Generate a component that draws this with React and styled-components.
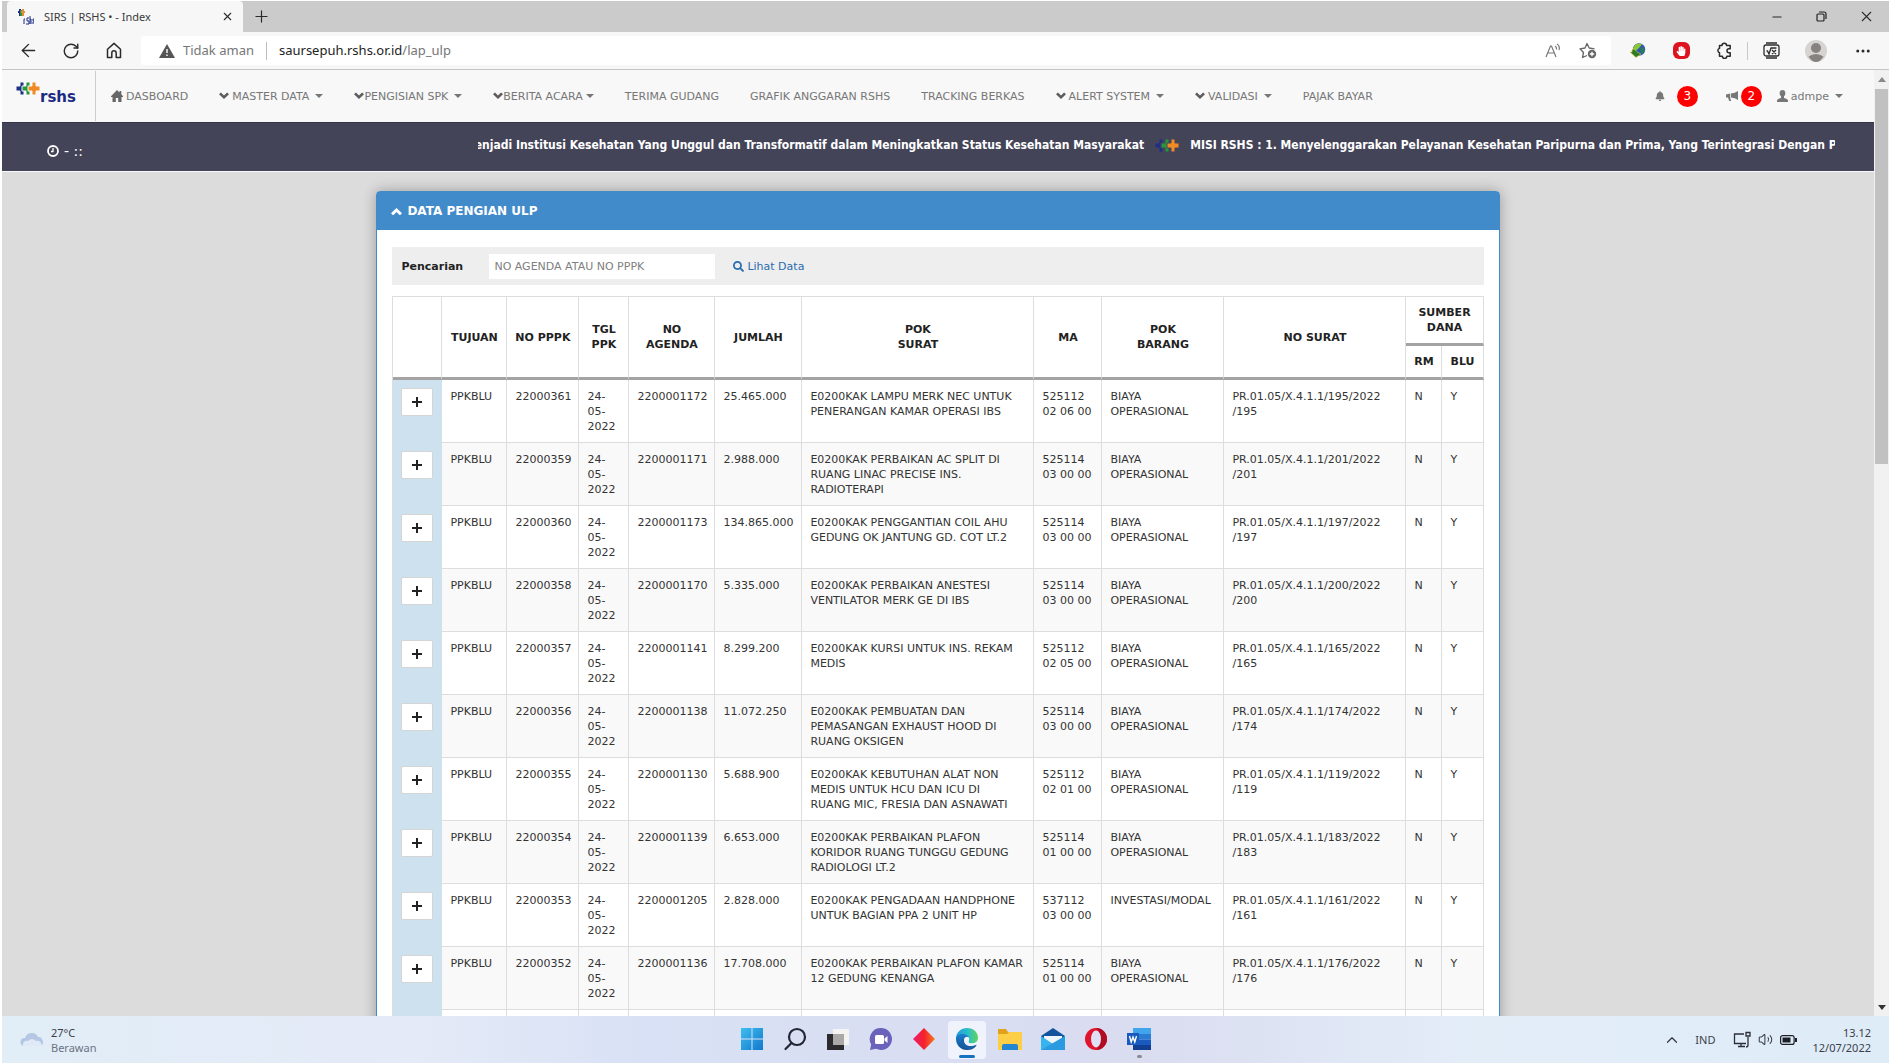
import React from "react";
import styled, { createGlobalStyle } from "styled-components";
import { ArrowLeft, RotateCw, X, Minus, Plus, ChevronUp, Volume2, Ellipsis } from "lucide-react";
import { FaBell, FaHandPaper, FaSearch } from "react-icons/fa";

const GlobalStyle = createGlobalStyle`
  * {
    box-sizing: border-box;
  }
  body {
    margin: 0;
    background: #ffffff;
    font-family: "DejaVu Sans", Verdana, sans-serif;
    font-size: 11px;
    line-height: 15px;
    color: #333333;
  }
  button, input {
    font-family: inherit;
    font-size: inherit;
    color: inherit;
  }
  svg {
    display: block;
    flex-shrink: 0;
  }
`;

const Screen = styled.div`
  height: 100vh;
  display: flex;
  flex-direction: column;
  overflow: hidden;
  padding: 1px 3px 1px 2px;
`;

/* ---------- browser ---------- */

const TabBar = styled.div`
  height: 31px;
  flex-shrink: 0;
  display: flex;
  background: #cbcbcb;
  font-family: "Noto Sans", sans-serif;
`;

const Tab = styled.div`
  width: 236px;
  margin-left: 5px;
  padding: 0 10px;
  display: flex;
  align-items: center;
  gap: 10px;
  background: #f7f7f7;
  border-radius: 4px 4px 0 0;
  color: #3b3b3b;
`;

const TabTitle = styled.span`
  flex: 1;
  white-space: nowrap;
`;

const IconButton = styled.button`
  width: ${(p) => p.$w || 24}px;
  height: ${(p) => p.$h || 24}px;
  padding: 0;
  border: 0;
  background: none;
  display: flex;
  align-items: center;
  justify-content: center;
  color: #2b2b2b;
  cursor: pointer;
`;

const WindowControls = styled.div`
  margin-left: auto;
  display: flex;
`;

const Toolbar = styled.div`
  height: 38px;
  flex-shrink: 0;
  display: flex;
  align-items: center;
  background: #f7f7f7;
  border-bottom: 1px solid #c4c4c4;
  font-family: "Noto Sans", sans-serif;
`;

const NavButtons = styled.div`
  display: flex;
  gap: 19px;
  padding: 0 15px 0 14px;
`;

const AddressBar = styled.div`
  flex: 1;
  height: 29px;
  padding: 0 14px 0 18px;
  display: flex;
  align-items: center;
  gap: 8px;
  background: #ffffff;
  border-radius: 3px;
  font-size: 13px;
  color: #767676;
`;

const Separator = styled.span`
  width: 1px;
  height: 18px;
  margin: 0 4px;
  background: #bdbdbd;
`;

const Url = styled.span`
  flex: 1;
  b {
    font-weight: 400;
    color: #222222;
  }
`;

const Extensions = styled.div`
  display: flex;
  align-items: center;
  gap: 19px;
  padding: 0 12px 0 15px;
`;

const ExtSeparator = styled.span`
  width: 1px;
  height: 18px;
  margin: 0 -8px;
  background: #c8c8c8;
`;

const StopSign = styled.span`
  width: 17px;
  height: 17px;
  border-radius: 6px;
  background: #dd1420;
  color: #ffffff;
  display: flex;
  align-items: center;
  justify-content: center;
`;

const Viewport = styled.div`
  flex: 1;
  min-height: 0;
  display: flex;
`;

const Page = styled.div`
  flex: 1;
  min-width: 0;
  overflow: hidden;
  background: #dcdcdc;
`;

const Scrollbar = styled.div`
  width: 15px;
  padding: 4px 0;
  display: flex;
  flex-direction: column;
  align-items: center;
  background: #f1f1f1;
`;

const Thumb = styled.div`
  width: 13px;
  height: 40%;
  margin: 5px 0 auto;
  background: #c1c1c1;
`;

const ScrollArrow = styled.span`
  height: 10px;
  display: flex;
  align-items: center;
`;

/* ---------- site header ---------- */

const Navbar = styled.nav`
  height: 52px;
  display: flex;
  align-items: center;
  background: #f8f8f8;
`;

const Brand = styled.a`
  width: 94px;
  height: 50px;
  padding: 11px 0 0 14px;
  display: flex;
  border-right: 1px solid #cccccc;
  text-decoration: none;
`;

const BrandName = styled.span`
  margin-top: 8px;
  font-size: 15px;
  font-weight: 700;
  color: #1c2a80;
`;

const Menu = styled.ul`
  flex: 1;
  margin: 0;
  padding: 0;
  display: flex;
  list-style: none;
`;

const MenuLink = styled.a`
  padding: 0 16px 0 15px;
  display: flex;
  align-items: center;
  gap: ${(p) => (p.$tight ? 0 : 3)}px;
  color: #777777;
  text-decoration: none;
  white-space: nowrap;
`;

const Caret = styled.span`
  margin-left: ${(p) => p.$space || 3}px;
  border-top: 4px solid;
  border-left: 4px solid transparent;
  border-right: 4px solid transparent;
`;

const UserMenu = styled.div`
  display: flex;
  align-items: center;
  padding-right: 15px;
  color: #777777;
`;

const Notice = styled.a`
  display: flex;
  align-items: center;
  gap: ${(p) => p.$gap}px;
  margin-right: ${(p) => p.$after}px;
  color: #777777;
  text-decoration: none;
`;

const Badge = styled.span`
  width: 21px;
  height: 21px;
  border-radius: 50%;
  display: flex;
  align-items: center;
  justify-content: center;
  background: #ff0000;
  color: #ffffff;
  font-size: 12px;
`;

const InfoBar = styled.div`
  height: 50px;
  padding: 0 39px 0 45px;
  display: flex;
  align-items: center;
  background: #444459;
  border-top: 1px solid #343446;
  border-bottom: 1px solid #fafafa;
  color: #ffffff;
`;

const Clock = styled.div`
  width: 431px;
  padding-top: 8px;
  display: flex;
  align-items: center;
  gap: 5px;
  font-size: 14px;
`;

const Marquee = styled.div`
  flex: 1;
  min-width: 0;
  padding-bottom: 3px;
  overflow: hidden;
  display: flex;
  align-items: center;
  gap: 11px;
  font-family: "DejaVu Sans Condensed", Tahoma, "Noto Sans", sans-serif;
  font-size: 12px;
  font-weight: 700;
  white-space: nowrap;
`;

const Vision = styled.span`
  margin-left: -14px;
`;

/* ---------- panel ---------- */

const Panel = styled.section`
  width: 60%;
  margin: 19px auto 0;
  background: #ffffff;
  border: 1px solid #428bca;
  border-radius: 4px;
  box-shadow: 0 0 14px rgba(0, 0, 0, 0.3);
`;

const PanelHeading = styled.h1`
  height: 38px;
  margin: 0;
  padding: 0 14px;
  display: flex;
  align-items: center;
  gap: 5px;
  background: #428bca;
  color: #ffffff;
  font-size: 12px;
`;

const PanelBody = styled.div`
  padding: 17px 15px;
`;

const SearchForm = styled.form`
  height: 38px;
  margin-bottom: 11px;
  padding: 0 9px;
  display: flex;
  align-items: center;
  background: #eeeeee;
`;

const SearchLabel = styled.label`
  width: 88px;
  font-weight: 700;
  color: #222222;
`;

const SearchInput = styled.input`
  width: 226px;
  height: 25px;
  padding: 0 5px;
  border: 0;
  background: #ffffff;
  &::placeholder {
    color: #808080;
    opacity: 1;
  }
`;

const SearchLink = styled.a`
  margin-left: 18px;
  display: flex;
  align-items: center;
  gap: 3px;
  color: #2a6cae;
  text-decoration: none;
`;

const Table = styled.table`
  width: 100%;
  table-layout: fixed;
  border-collapse: separate;
  border-spacing: 0;
  border-top: 1px solid #dddddd;
  border-left: 1px solid #dddddd;
`;

const Th = styled.th`
  padding: 8px 0;
  border-right: 1px solid #dddddd;
  border-bottom: 3px solid #a3a3a3;
  color: #222222;
`;

const Row = styled.tr`
  background: ${(p) => (p.$striped ? "#f9f9f9" : "#ffffff")};
`;

const Td = styled.td`
  padding: 9px 8px 8px;
  border-right: 1px solid #dddddd;
  border-bottom: 1px solid #dddddd;
  vertical-align: top;
  white-space: pre-line;
`;

const ExpandCell = styled.td`
  padding: 8px 8px 0;
  background: #cee1ee;
  vertical-align: top;
`;

const ExpandButton = styled.button`
  width: 32px;
  height: 28px;
  padding: 0;
  border: 1px solid #d5d5d5;
  border-radius: 2px;
  background: #ffffff;
  color: #222222;
  cursor: pointer;
  svg {
    margin: 0 auto;
  }
`;

/* ---------- taskbar ---------- */

const Taskbar = styled.footer`
  height: 47px;
  flex-shrink: 0;
  display: grid;
  grid-template-columns: 1fr auto 1fr;
  align-items: center;
  background: linear-gradient(90deg, #e1edf7, #e4eaf7 22%, #d8e1f5 34%, #dadcf0 60%, #e3edf8 78%, #deecf8);
  font-family: "Noto Sans", sans-serif;
  color: #3c3f4a;
`;

const Weather = styled.div`
  padding-left: 18px;
  display: flex;
  align-items: center;
  gap: 6px;
`;

const Muted = styled.div`
  color: #6c7384;
`;

const Apps = styled.div`
  display: flex;
  gap: 5px;
`;

const AppButton = styled.button`
  width: 38px;
  height: 38px;
  padding: 6px 0 0;
  border: 0;
  border-radius: 4px;
  background: ${(p) => (p.$active ? "#f0f3fc" : "none")};
  display: flex;
  flex-direction: column;
  align-items: center;
  gap: 4px;
`;

const Running = styled.span`
  width: ${(p) => (p.$active ? 16 : 5)}px;
  height: 3px;
  border-radius: 2px;
  background: ${(p) => (p.$active ? "#1672c0" : "#8a8d96")};
`;

const Tray = styled.div`
  padding-right: 18px;
  display: flex;
  align-items: center;
  justify-content: flex-end;
`;

const TrayIcons = styled.div`
  margin: 0 15px 0 7px;
  display: flex;
  align-items: center;
  gap: 7px;
`;

const Language = styled.span`
  margin: 0 11px 0 7px;
`;

const DateTime = styled.div`
  text-align: right;
`;

function Cross({ x, fill, edge }) {
  return (
    <path
      d={`M${x + 4} 0h4v4h4v5h-4v4h-4v-4h-4v-5h4z`}
      fill={fill}
      stroke={edge}
      strokeWidth="1"
      strokeLinejoin="round"
    />
  );
}

function LogoMark({ edge = "#f8f8f8" }) {
  return (
    <svg width="24" height="13" viewBox="0 0 24 13" aria-hidden="true">
      <Cross x={0} fill="#1d2f86" edge={edge} />
      <Cross x={6} fill="#27963c" edge={edge} />
      <Cross x={12} fill="#f08a24" edge={edge} />
    </svg>
  );
}

function Favicon() {
  return (
    <svg width="17" height="17" viewBox="0 0 17 17" aria-hidden="true">
      <path d="M3 1v7M1 4h4" stroke="#1d2f86" strokeWidth="2" />
      <path d="M4 2v6" stroke="#27963c" strokeWidth="2" />
      <path d="M6 1v7M4 4h4" stroke="#e88a3a" strokeWidth="2" />
      <path d="M7 16v-5h1M12 10h-2v3h2v3h-3M13 8v8M13 11h1v5M17 11h-1v2h1v2h-2" stroke="#1d2f86" fill="none" />
    </svg>
  );
}

function HomeOutline() {
  return (
    <svg width="16" height="17" viewBox="0 0 16 17" fill="none" stroke="#2b2b2b" strokeWidth="1.5">
      <path d="M1.5 7.2 8 1.4l6.500 5.800V15.500H10.200V11a2.200 2.200 0 0 0-4.400 0v4.500H1.500z" strokeLinejoin="round" />
    </svg>
  );
}

function HomeSolid() {
  return (
    <svg width="12" height="12" viewBox="0 0 12 12" fill="#666666">
      <path d="M6 0 8.500 2.500V1h1.800v3.300L12 6.200V7h-1.500v5H7.200V8H4.800v4H1.500V7H0v-.8z" />
    </svg>
  );
}

function Chevron({ up, size = 10, color = "#5c5c5c" }) {
  return (
    <svg width={size} height={size * 0.8} viewBox="0 0 10 8" fill={color}>
      <path d={up ? "M5 1 10 5.700 8.100 7.600 5 4.600 1.900 7.600 0 5.700z" : "M5 7 0 2.300 1.900.4 5 3.400 8.100.4 10 2.300z"} />
    </svg>
  );
}

function Bullhorn() {
  return (
    <svg width="12" height="11" viewBox="0 0 12 11" fill="#777777">
      <path d="M12 0v9Q9 6.800 5 6.600V2.500Q9 2.200 12 0zM0 3.500 4.200 2.600v4L5 10H3.200L2 6.500H0z" />
    </svg>
  );
}

function Warning() {
  return (
    <svg width="16" height="14" viewBox="0 0 16 14">
      <path d="M8 0 16 14H0z" fill="#555555" />
      <path d="M8 5v4M8 10.500v1.500" stroke="#ffffff" strokeWidth="1.400" />
    </svg>
  );
}

function ReadAloud() {
  return (
    <svg width="17" height="16" viewBox="0 0 17 16" fill="none" stroke="#777777" strokeWidth="1.200">
      <path d="M1 14 5.500 3h1L11 14M2.800 10h6.500" />
      <path d="M10 3q2 1.200 1.500 3.500M12 1q3.300 2.300 2 6" />
    </svg>
  );
}

function StarAdd() {
  return (
    <svg width="18" height="17" viewBox="0 0 18 17" fill="none" stroke="#666666" strokeWidth="1.300">
      <path d="M8 13.500 3.500 15.500 4.500 10.500 1 6.800 6 6 8 1.500 10.200 6 15.500 6.800" strokeLinejoin="round" />
      <circle cx="13" cy="12" r="4.200" fill="#666666" stroke="none" />
      <path d="M13 9.800v4.400M10.800 12h4.400" stroke="#ffffff" />
    </svg>
  );
}

function IdmIcon() {
  return (
    <svg width="16" height="15" viewBox="0 0 16 15">
      <circle cx="9" cy="6.500" r="6.200" fill="#2c55b4" />
      <path d="M4 3Q8-1 12 1.500L9 5 5 8.500 2.500 7z" fill="#8cc63a" />
      <path d="M11 4q3 0 4 3-1 3-3 4l-2-3z" fill="#2a7b60" />
      <path d="M2 7v2H0l6 5.500L11 11 8 9.500 4 6z" fill="#2b7d26" stroke="#e5c84a" strokeWidth=".6" />
    </svg>
  );
}

function PuzzleIcon() {
  return (
    <svg width="16" height="17" viewBox="0 0 16 17" fill="none" stroke="#2b2b2b" strokeWidth="1.500" strokeLinejoin="round">
      <path d="M3.500 3.500H6a2.300 2.300 0 0 1 4.600 0h3.600v3.200h-1.200a2 2 0 0 0 0 4h1.200v3.600h-3.400a2.200 2.200 0 0 1-4.400 0H3.500v-3.500a2.300 2.300 0 0 1 0-4.400z" />
    </svg>
  );
}

function MathSolver() {
  return (
    <svg width="17" height="17" viewBox="0 0 17 17" fill="none" stroke="#2b2b2b" strokeWidth="1.300">
      <rect x="1" y="3" width="15" height="11" rx="2" />
      <path d="M3 1h11M3 16h11M3.500 9l1 0 1.500 3 2-6h5.500M9 8l4 4M13 8l-4 4" />
    </svg>
  );
}

function Avatar() {
  return (
    <svg width="22" height="22" viewBox="0 0 22 22">
      <circle cx="11" cy="11" r="11" fill="#d6d3d1" />
      <circle cx="11" cy="8" r="5" fill="#858280" />
      <path d="M3.500 16.500q7.500-5 15 0Q15 22 11 22t-7.500-5.500z" fill="#858280" />
    </svg>
  );
}

function RestoreIcon() {
  return (
    <svg width="11" height="11" viewBox="0 0 11 11" fill="none" stroke="#222222" strokeWidth="1.200">
      <rect x="1" y="3" width="7" height="7" rx="1" />
      <path d="M3 1h5q2 0 2 2v5" />
    </svg>
  );
}

function ClockIcon() {
  return (
    <svg width="12" height="12" viewBox="0 0 12 12" fill="none" stroke="#ffffff">
      <circle cx="6" cy="6" r="5" strokeWidth="1.800" />
      <path d="M6 3v3.500H4" strokeWidth="1.300" />
    </svg>
  );
}

function UserIcon() {
  return (
    <svg width="11" height="12" viewBox="0 0 11 12" fill="#777777">
      <ellipse cx="5.500" cy="3.300" rx="2.800" ry="3.300" />
      <path d="M4 5h3v3q4 1 4 2.500V12H0v-1.500Q0 9 4 8z" />
    </svg>
  );
}

function PlusIcon() {
  return (
    <svg width="10" height="10" viewBox="0 0 10 10" fill="none" stroke="#222222" strokeWidth="2">
      <path d="M5 0v10M0 5h10" />
    </svg>
  );
}

function Triangle({ up, color }) {
  return (
    <svg width="8" height="5" viewBox="0 0 8 5">
      <path d={up ? "M0 5 4 0 8 5z" : "M0 0h8L4 5z"} fill={color} />
    </svg>
  );
}

function Cloud() {
  return (
    <svg width="25" height="15" viewBox="0 0 25 15">
      <path d="M4 14a4 4 0 0 1 1-8A7 7 0 0 1 18 5a5 5 0 0 1 3 9z" fill="#b4c7e4" />
      <path d="M3 14a4 4 0 0 1 5-5q4-4 8 0 5-1 6 5z" fill="#e0e9f6" />
    </svg>
  );
}

const appIcons = {
  Start: (
    <>
      <defs>
        <linearGradient id="win" x1="0" y1="0" x2="1" y2="1">
          <stop offset="0" stopColor="#3fbdf0" />
          <stop offset="1" stopColor="#1279cb" />
        </linearGradient>
      </defs>
      <path d="M1 1h10.500v10.500H1zM12.500 1H23v10.500H12.500zM1 12.500h10.500V23H1zM12.500 12.500H23V23H12.500z" fill="url(#win)" />
    </>
  ),
  Search: (
    <g fill="none" stroke="#222733" strokeWidth="2.200" strokeLinecap="round">
      <circle cx="14" cy="10" r="8" />
      <path d="M8.500 16 2.500 22" />
    </g>
  ),
  "Task View": (
    <>
      <path d="M7 2h16v16H7z" fill="#f3f3f1" />
      <path d="M1 7h17v16H1z" fill="#2b2b2d" />
      <path d="M7 7h11v11H7z" fill="#aaa9a7" />
    </>
  ),
  Chat: (
    <>
      <path d="M12 1a11 11 0 1 1-5 20.800L1 23l1.200-5.500A11 11 0 0 1 12 1z" fill="#6a62bb" />
      <rect x="6" y="8" width="9" height="9" rx="1.500" fill="#ffffff" />
      <path d="m15.500 11.500 3-2.500v7l-3-2.500z" fill="#ffffff" />
    </>
  ),
  Diamond: (
    <>
      <defs>
        <linearGradient id="dia">
          <stop offset="0" stopColor="#ee1b70" />
          <stop offset=".5" stopColor="#f4212c" />
          <stop offset="1" stopColor="#f77b1e" />
        </linearGradient>
      </defs>
      <path d="M12 1 23 12 12 23 1 12z" fill="url(#dia)" />
    </>
  ),
  Edge: (
    <>
      <defs>
        <linearGradient id="edgeTop">
          <stop offset="0" stopColor="#1f9be0" />
          <stop offset=".55" stopColor="#2cc0c8" />
          <stop offset="1" stopColor="#5fd45c" />
        </linearGradient>
        <linearGradient id="edgeLow" x2="0" y2="1">
          <stop offset="0" stopColor="#1b7fd2" />
          <stop offset="1" stopColor="#14508f" />
        </linearGradient>
      </defs>
      <path d="M1 12C1 5 6 1 12 1c7 0 11 5 11 9.500 0 4-3 6-6 6-2.500 0-4-1-3.500-2 1.500-2 .5-5.500-3-5.500C6 9 2 10 1 12z" fill="url(#edgeTop)" />
      <path d="M1 12c0-4 4-5.500 7.500-5 3 .3 5 2 5.500 3.500-1.500-1.500-5-1-5 3.500 0 4 4.500 6.500 12.500 4.200C19.500 21.500 16 23 12 23 5.500 23 1 18 1 12z" fill="url(#edgeLow)" />
      <path d="M9 14c0-4 3-4.500 4.500-3.500 1 1.500.5 3-.2 4.200-.3 1 1.200 1.800 3.700 1.800 1.500 0 3-.5 4-1.200.8.600 1 1.700.5 2.900C13.500 20.500 9 18 9 14z" fill="#f0f3fc" />
      <path d="M7 12.500c-2 6 3.500 10 9.500 9.700 2.500-1.200 4.500-3 5.200-4.500-7 3-13.200.8-12.700-4.700z" fill="#1a5fa8" />
    </>
  ),
  "File Explorer": (
    <>
      <path d="M0 2h8l2 3h14v17H0z" fill="#e0a11b" />
      <path d="M0 7h9l2-2h13v18H0z" fill="#fccf46" />
      <path d="M4 23v-4q0-2 2-2h12q2 0 2 2v4z" fill="#2386d0" />
    </>
  ),
  Mail: (
    <>
      <path d="M0 9 12 1l12 8v14H0z" fill="#14549c" />
      <path d="M3 9h18v8H3z" fill="#eef6fc" />
      <path d="M0 9l12 8 12-8v14H0z" fill="#35b4ee" />
      <path d="M0 23 24 9v14z" fill="#2a9be0" />
    </>
  ),
  Opera: (
    <>
      <circle cx="12" cy="12" r="11" fill="#e0142c" />
      <path d="M12 1a11 11 0 0 1 0 22c5-2 5-20 0-22z" fill="#b00d24" />
      <ellipse cx="12" cy="12" rx="5" ry="8.500" fill="#dde1f3" />
    </>
  ),
  Word: (
    <>
      <path d="M6 1h18v6H6z" fill="#41a5ee" />
      <path d="M6 7h18v5.500H6z" fill="#2b7cd3" />
      <path d="M6 12.500h18V18H6z" fill="#185abd" />
      <path d="M6 18h18v5H6z" fill="#103f91" />
      <path d="M0 6h12v12H0z" fill="#185abd" />
      <path d="m2.500 9 1.700 6L6 10l1.800 5 1.700-6" fill="none" stroke="#ffffff" strokeWidth="1.400" />
    </>
  ),
};

const menu = [
  { label: "DASBOARD", icon: "home" },
  { label: "MASTER DATA", icon: "down", caret: 3 },
  { label: "PENGISIAN SPK", icon: "down", caret: 6, tight: true },
  { label: "BERITA ACARA", icon: "down", caret: 3, tight: true },
  { label: "TERIMA GUDANG" },
  { label: "GRAFIK ANGGARAN RSHS" },
  { label: "TRACKING BERKAS" },
  { label: "ALERT SYSTEM", icon: "down", caret: 3 },
  { label: "VALIDASI", icon: "down", caret: 3 },
  { label: "PAJAK BAYAR" },
];

const columns = [49, 65, 72, 50, 86, 87, 232, 68, 122, 182, 36, 41];

const rows = [
  ["22000361", "2200001172", "25.465.000", "E0200KAK LAMPU MERK NEC UNTUK\nPENERANGAN KAMAR OPERASI IBS", "525112 02 06 00", "195"],
  ["22000359", "2200001171", "2.988.000", "E0200KAK PERBAIKAN AC SPLIT DI\nRUANG LINAC PRECISE INS.\nRADIOTERAPI", "525114 03 00 00", "201"],
  ["22000360", "2200001173", "134.865.000", "E0200KAK PENGGANTIAN COIL AHU\nGEDUNG OK JANTUNG GD. COT LT.2", "525114 03 00 00", "197"],
  ["22000358", "2200001170", "5.335.000", "E0200KAK PERBAIKAN ANESTESI\nVENTILATOR MERK GE DI IBS", "525114 03 00 00", "200"],
  ["22000357", "2200001141", "8.299.200", "E0200KAK KURSI UNTUK INS. REKAM\nMEDIS", "525112 02 05 00", "165"],
  ["22000356", "2200001138", "11.072.250", "E0200KAK PEMBUATAN DAN\nPEMASANGAN EXHAUST HOOD DI\nRUANG OKSIGEN", "525114 03 00 00", "174"],
  ["22000355", "2200001130", "5.688.900", "E0200KAK KEBUTUHAN ALAT NON\nMEDIS UNTUK HCU DAN ICU DI\nRUANG MIC, FRESIA DAN ASNAWATI", "525112 02 01 00", "119"],
  ["22000354", "2200001139", "6.653.000", "E0200KAK PERBAIKAN PLAFON\nKORIDOR RUANG TUNGGU GEDUNG\nRADIOLOGI LT.2", "525114 01 00 00", "183"],
  ["22000353", "2200001205", "2.828.000", "E0200KAK PENGADAAN HANDPHONE\nUNTUK BAGIAN PPA 2 UNIT HP", "537112 03 00 00", "161", "INVESTASI/MODAL"],
  ["22000352", "2200001136", "17.708.000", "E0200KAK PERBAIKAN PLAFON KAMAR\n12 GEDUNG KENANGA", "525114 01 00 00", "176"],
];

function Browser() {
  return (
    <>
      <TabBar>
        <Tab>
          <Favicon />
          <TabTitle>SIRS | RSHS • - Index</TabTitle>
          <IconButton $w={12} aria-label="Close tab"><X size={13} /></IconButton>
        </Tab>
        <IconButton $w={36} $h={31} aria-label="New tab"><Plus size={19} strokeWidth={1.5} /></IconButton>
        <WindowControls>
          <IconButton $w={45} $h={31} aria-label="Minimize"><Minus size={14} strokeWidth={2} /></IconButton>
          <IconButton $w={45} $h={31} aria-label="Restore"><RestoreIcon /></IconButton>
          <IconButton $w={45} $h={31} aria-label="Close"><X size={17} strokeWidth={1.5} /></IconButton>
        </WindowControls>
      </TabBar>
      <Toolbar>
        <NavButtons>
          <IconButton aria-label="Back"><ArrowLeft size={21} strokeWidth={1.6} /></IconButton>
          <IconButton aria-label="Reload"><RotateCw size={18} strokeWidth={1.9} /></IconButton>
          <IconButton aria-label="Home"><HomeOutline /></IconButton>
        </NavButtons>
        <AddressBar>
          <Warning />
          <span>Tidak aman</span>
          <Separator />
          <Url><b>saursepuh.rshs.or.id</b>/lap_ulp</Url>
          <IconButton $w={36} aria-label="Read aloud"><ReadAloud /></IconButton>
          <IconButton $w={18} aria-label="Add favorite"><StarAdd /></IconButton>
        </AddressBar>
        <Extensions>
          <IconButton aria-label="Download manager"><IdmIcon /></IconButton>
          <IconButton aria-label="Ad blocker"><StopSign><FaHandPaper size={10} /></StopSign></IconButton>
          <IconButton aria-label="Extensions"><PuzzleIcon /></IconButton>
          <ExtSeparator />
          <IconButton aria-label="Math solver"><MathSolver /></IconButton>
          <IconButton $w={28} aria-label="Profile"><Avatar /></IconButton>
          <IconButton $w={28} aria-label="More"><Ellipsis size={18} /></IconButton>
        </Extensions>
      </Toolbar>
    </>
  );
}

function Header() {
  return (
    <header>
      <Navbar>
        <Brand href="#">
          <LogoMark />
          <BrandName>rshs</BrandName>
        </Brand>
        <Menu>
          {menu.map((item) => (
            <li key={item.label}>
              <MenuLink href="#" $tight={item.tight}>
                {item.icon === "home" && <HomeSolid />}
                {item.icon === "down" && <Chevron />}
                {item.label}
                {item.caret && <Caret $space={item.caret} />}
              </MenuLink>
            </li>
          ))}
        </Menu>
        <UserMenu>
          <Notice href="#" $gap={12} $after={28}><FaBell size={10} /><Badge>3</Badge></Notice>
          <Notice href="#" $gap={3} $after={0}><Bullhorn /><Badge>2</Badge></Notice>
          <MenuLink href="#"><UserIcon />admpe<Caret /></MenuLink>
        </UserMenu>
      </Navbar>
      <InfoBar>
        <Clock><ClockIcon /> - ::</Clock>
        <Marquee>
          <Vision>
            Menjadi Institusi Kesehatan Yang Unggul dan Transformatif dalam Meningkatkan Status Kesehatan Masyarakat
          </Vision>
          <LogoMark edge="#444459" />
          <span>
            MISI RSHS : 1. Menyelenggarakan Pelayanan Kesehatan Paripurna dan Prima, Yang Terintegrasi Dengan P
          </span>
        </Marquee>
      </InfoBar>
    </header>
  );
}

function DataTable() {
  return (
    <Table>
      <colgroup>
        {columns.map((width, i) => (
          <col key={i} width={width} />
        ))}
      </colgroup>
      <thead>
        <tr>
          <Th rowSpan={2} />
          <Th rowSpan={2}>TUJUAN</Th>
          <Th rowSpan={2}>NO PPPK</Th>
          <Th rowSpan={2}>TGL<br />PPK</Th>
          <Th rowSpan={2}>NO<br />AGENDA</Th>
          <Th rowSpan={2}>JUMLAH</Th>
          <Th rowSpan={2}>POK<br />SURAT</Th>
          <Th rowSpan={2}>MA</Th>
          <Th rowSpan={2}>POK<br />BARANG</Th>
          <Th rowSpan={2}>NO SURAT</Th>
          <Th colSpan={2}>SUMBER<br />DANA</Th>
        </tr>
        <tr>
          <Th>RM</Th>
          <Th>BLU</Th>
        </tr>
      </thead>
      <tbody>
        {rows.map(([pppk, agenda, jumlah, pok, ma, surat, barang = "BIAYA OPERASIONAL"], i) => (
          <Row key={pppk} $striped={i % 2 === 1}>
            <ExpandCell>
              <ExpandButton aria-label={`Detail ${pppk}`}><PlusIcon /></ExpandButton>
            </ExpandCell>
            <Td>PPKBLU</Td>
            <Td>{pppk}</Td>
            <Td>24-<br />05-<br />2022</Td>
            <Td>{agenda}</Td>
            <Td>{jumlah}</Td>
            <Td>{pok}</Td>
            <Td>{ma}</Td>
            <Td>{barang}</Td>
            <Td>PR.01.05/X.4.1.1/{surat}/2022<br />/{surat}</Td>
            <Td>N</Td>
            <Td>Y</Td>
          </Row>
        ))}
        <Row>
          <ExpandCell />
          {columns.slice(1).map((_, i) => (
            <Td key={i} />
          ))}
        </Row>
      </tbody>
    </Table>
  );
}

function WindowsTaskbar() {
  return (
    <Taskbar>
      <Weather>
        <Cloud />
        <div>
          <div>27°C</div>
          <Muted>Berawan</Muted>
        </div>
      </Weather>
      <Apps>
        {Object.entries(appIcons).map(([name, art]) => (
          <AppButton key={name} $active={name === "Edge"} aria-label={name}>
            <svg width="24" height="24" viewBox="0 0 24 24">{art}</svg>
            {name === "Edge" && <Running $active />}
            {name === "Word" && <Running />}
          </AppButton>
        ))}
      </Apps>
      <Tray>
        <ChevronUp size={18} strokeWidth={1.8} />
        <TrayIcons>
          <Language>IND</Language>
          <svg width="18" height="17" viewBox="0 0 18 17" fill="none" stroke="#2b2e38" strokeWidth="1.300">
            <path d="M11 3H1.500v9.500H13M5 15.500h7M8 12.500v3M15 6v8q0 2-2 2M13 1.500h4V5h-4z" />
          </svg>
          <Volume2 size={15} strokeWidth={1.7} />
          <svg width="17" height="10" viewBox="0 0 17 10">
            <rect x=".6" y=".6" width="13.500" height="8.800" rx="2" fill="none" stroke="#1d1f26" strokeWidth="1.200" />
            <path d="M2.500 2.500h8v5h-8zM15 3h2v4h-2z" fill="#1d1f26" />
          </svg>
        </TrayIcons>
        <DateTime>
          13.12<br />12/07/2022
        </DateTime>
      </Tray>
    </Taskbar>
  );
}

export default function App() {
  return (
    <>
      <GlobalStyle />
      <Screen>
        <Browser />
        <Viewport>
          <Page>
            <Header />
            <Panel>
              <PanelHeading><Chevron up size={11} color="#ffffff" /> DATA PENGIAN ULP</PanelHeading>
              <PanelBody>
                <SearchForm>
                  <SearchLabel htmlFor="pencarian">Pencarian</SearchLabel>
                  <SearchInput id="pencarian" placeholder="NO AGENDA ATAU NO PPPK" />
                  <SearchLink href="#"><FaSearch size={11} /> Lihat Data</SearchLink>
                </SearchForm>
                <DataTable />
              </PanelBody>
            </Panel>
          </Page>
          <Scrollbar>
            <ScrollArrow><Triangle up color="#8a8a8a" /></ScrollArrow>
            <Thumb />
            <ScrollArrow><Triangle color="#333333" /></ScrollArrow>
          </Scrollbar>
        </Viewport>
        <WindowsTaskbar />
      </Screen>
    </>
  );
}
